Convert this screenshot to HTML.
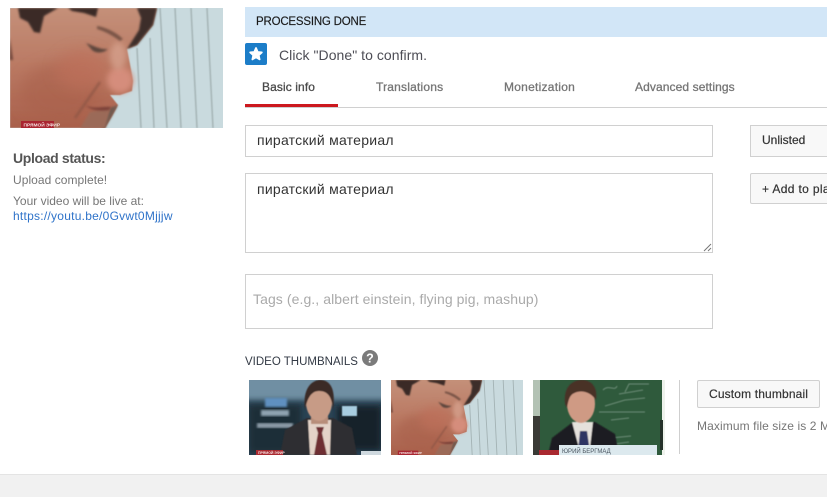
<!DOCTYPE html>
<html><head><meta charset="utf-8">
<style>
html,body{margin:0;padding:0;background:#fff}
body{width:827px;height:497px;position:relative;overflow:hidden;font-family:"Liberation Sans",sans-serif;font-size:12px;color:#333}
.a{position:absolute;white-space:nowrap;line-height:16px}
.box{position:absolute;box-sizing:border-box;border:1px solid #d0d0d0;background:#fff}
svg{position:absolute;display:block}
</style></head><body>
<svg width="0" height="0" style="position:absolute">
<defs>
<filter id="b05"><feGaussianBlur stdDeviation=".6"/></filter>
<filter id="b1"><feGaussianBlur stdDeviation="1.100"/></filter>
<filter id="b2" x="-30%" y="-30%" width="160%" height="160%"><feGaussianBlur stdDeviation="3"/></filter>
<filter id="b4" x="-40%" y="-40%" width="180%" height="180%"><feGaussianBlur stdDeviation="7"/></filter>
<linearGradient id="skin" x1="0" y1="0" x2="0" y2="1"><stop offset="0" stop-color="#c49079"/><stop offset=".45" stop-color="#bb7b65"/><stop offset="1" stop-color="#a9604b"/></linearGradient>
<symbol id="face" viewBox="0 0 213 120" preserveAspectRatio="none">
<rect width="213" height="120" fill="#c9dade"/>
<g stroke="#8c9a9a" stroke-width="1.500" fill="none" opacity=".6" filter="url(#b05)">
<path d="M150 0L157 120M165 0L171 120M181 0L187 120M197 0L203 120M127 40L131 120M140 30L144 120"/>
</g>
<g filter="url(#b05)">
<path d="M0 0H147L143 17L127 37L117 41L120 56L123 73L122 83L110 87L100 87L108 97L102 108L95 120H0Z" fill="url(#skin)"/>
</g>
<ellipse cx="50" cy="85" rx="40" ry="30" fill="#a9604b" filter="url(#b4)" opacity=".55"/>
<ellipse cx="72" cy="62" rx="26" ry="20" fill="#bd6f5a" filter="url(#b4)" opacity=".7"/>
<ellipse cx="110" cy="72" rx="13" ry="13" fill="#d58d7b" filter="url(#b2)"/>
<ellipse cx="108" cy="48" rx="8" ry="14" fill="#d5a08c" filter="url(#b2)" opacity=".8"/>
<path d="M65 110L90 74" stroke="#8a5444" stroke-width="2.500" fill="none" filter="url(#b1)" opacity=".7"/>
<path d="M92 120L100 100L108 97L102 108L95 120Z" fill="#6f5a4f" filter="url(#b1)"/>
<path d="M70 120L80 104L100 100L95 120Z" fill="#9b6a58" filter="url(#b1)"/>
<g filter="url(#b1)">
<path d="M8 0H48L34 8L30 25L24 24L18 14L10 10Z" fill="#3a2a26"/>
<path d="M58 0H88L86 9L74 5L62 3Z" fill="#3a2a26"/>
<path d="M127 0H147L143 17L127 37L117 41L129 22L131 10Z" fill="#3c2d29"/>
<path d="M87 18C95 19 106 24 113 31L110 33C102 27 94 23 87 21Z" fill="#7a5446"/>
<path d="M76 35C84 38 91 42 98 41C94 45 86 46 82 42Z" fill="#5e463e"/>
<path d="M75 97C84 102 92 98 101 99L99 102C90 103 82 103 75 97Z" fill="#7a3f38"/>
<path d="M0 30L3 52L0 52Z" fill="#6b4338"/>
</g>
<rect x="11" y="113" width="33" height="7" fill="#a92530"/>
<text x="13.500" y="118.500" font-family="Liberation Sans" font-size="4.800" font-weight="bold" fill="#f3dede">ПРЯМОЙ ЭФИР</text>
</symbol>
</defs>
</svg>

<svg style="left:10px;top:8px" width="213" height="120"><use href="#face" width="213" height="120"/></svg>

<div class="a" style="left:13px;top:150px;font-size:14px;font-weight:bold;color:#555;letter-spacing:-.35px">Upload status:</div>
<div class="a" style="left:13px;top:172px;color:#767676;letter-spacing:.05px">Upload complete!</div>
<div class="a" style="left:13px;top:193px;color:#767676">Your video will be live at:</div>
<div class="a" style="left:13px;top:208px;color:#2f73c9;letter-spacing:.25px">https://youtu.be/0Gvwt0Mjjjw</div>

<div style="position:absolute;left:245px;top:7px;width:582px;height:30px;background:#d2e6f7"></div>
<div class="a" style="left:256px;top:14px;font-size:11.500px;color:#1a1a1a;letter-spacing:-.2px;-webkit-text-stroke:.15px #1a1a1a">PROCESSING DONE</div>

<div style="position:absolute;left:245px;top:43px;width:22px;height:22px;background:#1c7dc8;border-radius:2px"></div>
<svg style="left:245px;top:43px" width="22" height="22" viewBox="0 0 22 22"><path d="M11 5L12.700 9L16.800 9.400L13.700 12.200L14.600 16.400L11 14.200L7.400 16.400L8.300 12.200L5.200 9.400L9.300 9Z" fill="#fff" stroke="#fff" stroke-width="1.800" stroke-linejoin="round"/></svg>
<div class="a" style="left:279px;top:47px;font-size:14px;color:#4d4d55;letter-spacing:.05px">Click "Done" to confirm.</div>

<div class="a" style="left:262px;top:79px;color:#4a4a4a;-webkit-text-stroke:.3px #4a4a4a;letter-spacing:.1px">Basic info</div>
<div class="a" style="left:376px;top:79px;color:#767676;-webkit-text-stroke:.3px #767676;letter-spacing:.2px">Translations</div>
<div class="a" style="left:504px;top:79px;color:#767676;-webkit-text-stroke:.3px #767676;letter-spacing:.25px">Monetization</div>
<div class="a" style="left:635px;top:79px;color:#767676;-webkit-text-stroke:.3px #767676;letter-spacing:.1px">Advanced settings</div>
<div style="position:absolute;left:245px;top:107px;width:582px;height:1px;background:#d0d0d0"></div>
<div style="position:absolute;left:245px;top:104px;width:93px;height:3px;background:#cc181e"></div>

<div class="box" style="left:245px;top:125px;width:468px;height:32px"></div>
<div class="a" style="left:257px;top:132px;font-size:14px;color:#333;letter-spacing:.25px">пиратский материал</div>

<div class="box" style="left:245px;top:173px;width:468px;height:80px"></div>
<div class="a" style="left:257px;top:181px;font-size:14px;color:#333;letter-spacing:.25px">пиратский материал</div>
<svg style="left:702px;top:242px" width="10" height="10" viewBox="0 0 10 10"><path d="M2 9L9 2M6 9L9 6" stroke="#777" stroke-width="1" fill="none"/></svg>

<div class="box" style="left:245px;top:274px;width:468px;height:55px"></div>
<div class="a" style="left:253px;top:291px;font-size:14px;color:#aaa;letter-spacing:.08px">Tags (e.g., albert einstein, flying pig, mashup)</div>

<div class="box" style="left:750px;top:125px;width:90px;height:32px;background:#f8f8f8"></div>
<div class="a" style="left:762px;top:132px;color:#333;-webkit-text-stroke:.2px #333">Unlisted</div>
<div class="box" style="left:750px;top:173px;width:90px;height:31px;background:#f8f8f8;border-radius:2px"></div>
<div class="a" style="left:762px;top:181px;color:#333;-webkit-text-stroke:.2px #333;letter-spacing:.35px">+ Add to playlist</div>

<div class="a" style="left:245px;top:354px;font-size:11.500px;color:#333a45">VIDEO THUMBNAILS</div>
<svg style="left:362px;top:350px" width="16" height="16" viewBox="0 0 16 16"><circle cx="8" cy="8" r="8" fill="#7b7b7b"/><text x="8" y="12.500" font-family="Liberation Sans" font-size="12.500" font-weight="bold" fill="#fff" text-anchor="middle">?</text></svg>

<!-- thumb 1 -->
<svg style="left:249px;top:380px" width="132" height="75" viewBox="0 0 132 75">
<rect width="132" height="75" fill="#2a4354"/>
<rect x="-6" y="-6" width="144" height="26" fill="#6f8fa3" filter="url(#b2)"/>
<rect x="0" y="25" width="52" height="48" fill="#1f2d39" filter="url(#b2)"/>
<rect x="88" y="26" width="44" height="44" fill="#15222c" filter="url(#b2)"/>
<rect x="16" y="18" width="22" height="9" fill="#5f90c0" filter="url(#b1)"/>
<rect x="93" y="26" width="15" height="10" fill="#a8cde0" filter="url(#b05)"/>
<rect x="8" y="43" width="36" height="5" fill="#8a9aa6" filter="url(#b1)"/>
<rect x="12" y="30" width="28" height="6" fill="#8fa3b0" filter="url(#b1)"/>
<g filter="url(#b05)">
<path d="M31 75L36 50L58 38H84L103 48L108 75Z" fill="#2e2d30"/>
<path d="M59 40H82L81 75H61Z" fill="#e4d3c8"/>
<path d="M67 47L75 47L73 53L78 75H65L69 53Z" fill="#6e2f32"/>
<rect x="62" y="28" width="17" height="16" fill="#b88e7a"/>
<ellipse cx="70" cy="22" rx="13" ry="19" fill="#c79b86"/>
<path d="M56 30C53 7 64 0 71 0C82 0 87 10 84 30C83 17 79 11 70 11C62 11 58 19 56 30Z" fill="#3a2b28"/>
</g>
<rect x="7" y="70" width="27" height="5" fill="#a92930"/>
<text x="9" y="74" font-family="Liberation Sans" font-size="3.500" font-weight="bold" fill="#f3dede">ПРЯМОЙ ЭФИР</text>
<rect x="112" y="71" width="20" height="4" fill="#cfd9df"/>
</svg>

<!-- thumb 2 -->
<svg style="left:391px;top:380px" width="132" height="75"><use href="#face" width="132" height="75"/></svg>

<!-- thumb 3 -->
<svg style="left:533px;top:380px" width="132" height="75" viewBox="0 0 132 75">
<rect width="132" height="75" fill="#2f5a3c"/>
<rect width="7" height="75" fill="#b3c2b4"/>
<rect x="0" y="36" width="7" height="39" fill="#3a3a36"/>
<rect x="129" y="0" width="3" height="75" fill="#eef2ec"/>
<rect x="127" y="40" width="3" height="30" fill="#24302a"/>
<g stroke="#8fa898" stroke-width="1" fill="none" opacity=".65" filter="url(#b05)">
<path d="M70 10C76 4 82 12 84 6M92 12L96 4H116M72 26L92 20L112 18M66 32H112M78 40L96 38M78 58L98 56M82 64L96 62M86 14L110 10"/>
</g>
<g filter="url(#b05)">
<path d="M15 75L19 58L40 42H62L82 54L86 75Z" fill="#1d1a20"/>
<path d="M39 42H60L57 68H46Z" fill="#e5e1dc"/>
<path d="M47 51H54L57 72H45Z" fill="#2d3563"/>
<ellipse cx="48" cy="24" rx="14" ry="19" fill="#cf9a84"/>
<path d="M32 24C30 5 41 0 49 0C59 0 65 8 63 20C59 14 52 10 44 12C38 14 36 16 34 28Z" fill="#4a3028"/>
</g>
<rect x="6" y="70" width="21" height="5" fill="#a92930"/>
<rect x="26" y="65" width="98" height="10" fill="#dce9ee"/>
<text x="29" y="73" font-family="Liberation Sans" font-size="6" fill="#4a5560">ЮРИЙ БЕРГМАД</text>
</svg>

<div style="position:absolute;left:679px;top:380px;width:1px;height:74px;background:#cfcfcf"></div>
<div class="box" style="left:697px;top:380px;width:123px;height:28px;background:#f8f8f8;border-radius:2px"></div>
<div class="a" style="left:709px;top:386px;color:#333;-webkit-text-stroke:.2px #333;letter-spacing:.15px">Custom thumbnail</div>
<div class="a" style="left:697px;top:418px;color:#767676;letter-spacing:.1px">Maximum file size is 2 MB.</div>

<div style="position:absolute;left:0;top:474px;width:827px;height:23px;background:#f1f1f1;border-top:1px solid #e4e4e4;box-sizing:border-box"></div>
</body></html>
